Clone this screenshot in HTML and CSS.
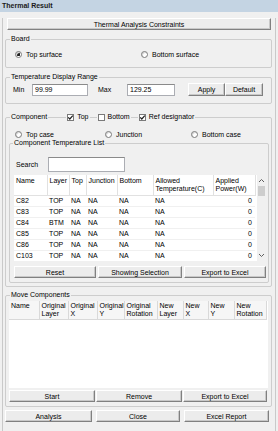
FILE: index.html
```html
<!DOCTYPE html>
<html lang="en">
<head>
    <meta charset="UTF-8">
    <meta name="viewport" content="width=device-width, initial-scale=1.0">
    <title>Thermal Result</title>
    <link rel="stylesheet" href="styles.css">
</head>
<body>
<div class="window">
    <div class="titlebar">Thermal Result</div>
    <div class="frame">
        <button class="btn constraints">Thermal Analysis Constraints</button>

        <div class="group board">
            <div class="group-head"><span class="title">Board</span></div>
            <div class="options board-opts">
                <span class="opt"><span class="radio on"></span>Top surface</span>
                <span class="opt"><span class="radio"></span>Bottom surface</span>
            </div>
        </div>

        <div class="group range">
            <div class="group-head"><span class="title">Temperature Display Range</span></div>
            <div class="range-row">
                <span class="lbl lbl-min">Min</span>
                <input class="field f-min" type="text" value="99.99">
                <span class="lbl lbl-max">Max</span>
                <input class="field f-max" type="text" value="129.25">
                <button class="btn apply">Apply</button>
                <button class="btn default">Default</button>
            </div>
        </div>

        <div class="group component">
            <div class="group-head">
                <span class="title">Component</span>
                <span class="check first"><span class="box"><svg width="7" height="7" viewBox="0 0 7 7"><path d="M1.2 3.4 L2.8 5 L5.8 1.6" fill="none" stroke="#1e1e1e" stroke-width="1.2"/></svg></span>Top</span>
                <span class="check"><span class="box"></span>Bottom</span>
                <span class="check"><span class="box"><svg width="7" height="7" viewBox="0 0 7 7"><path d="M1.2 3.4 L2.8 5 L5.8 1.6" fill="none" stroke="#1e1e1e" stroke-width="1.2"/></svg></span>Ref designator</span>
            </div>
            <div class="options comp-opts">
                <span class="opt"><span class="radio"></span>Top case</span>
                <span class="opt"><span class="radio"></span>Junction</span>
                <span class="opt"><span class="radio"></span>Bottom case</span>
            </div>

            <div class="group list">
                <div class="group-head"><span class="title">Component Temperature List</span></div>
                <div class="search">
                    <span class="lbl">Search</span>
                    <input class="field f-search" type="text">
                </div>
                <div class="listview">
                    <table class="temps">
                        <colgroup>
                            <col style="width:33px"><col style="width:22px"><col style="width:17px"><col style="width:31px">
                            <col style="width:36px"><col style="width:60px"><col style="width:42px">
                        </colgroup>
                        <thead>
                            <tr>
                                <th>Name</th><th>Layer</th><th>Top</th><th>Junction</th><th>Bottom</th>
                                <th>Allowed<br>Temperature(C)</th><th>Applied<br>Power(W)</th>
                            </tr>
                        </thead>
                        <tbody>
                            <tr><td>C82</td><td>TOP</td><td>NA</td><td>NA</td><td>NA</td><td>NA</td><td class="num">0</td></tr>
                            <tr><td>C83</td><td>TOP</td><td>NA</td><td>NA</td><td>NA</td><td>NA</td><td class="num">0</td></tr>
                            <tr><td>C84</td><td>BTM</td><td>NA</td><td>NA</td><td>NA</td><td>NA</td><td class="num">0</td></tr>
                            <tr><td>C85</td><td>TOP</td><td>NA</td><td>NA</td><td>NA</td><td>NA</td><td class="num">0</td></tr>
                            <tr><td>C86</td><td>TOP</td><td>NA</td><td>NA</td><td>NA</td><td>NA</td><td class="num">0</td></tr>
                            <tr><td>C103</td><td>TOP</td><td>NA</td><td>NA</td><td>NA</td><td>NA</td><td class="num">0</td></tr>
                        </tbody>
                    </table>
                    <div class="scrollbar">
                        <span class="arrow"><svg width="7" height="5" viewBox="0 0 7 5"><path d="M1 4 L3.5 1.5 L6 4" fill="none" stroke="#606060" stroke-width="1"/></svg></span>
                        <span class="thumb"></span>
                        <span class="track"></span>
                        <span class="arrow"><svg width="7" height="5" viewBox="0 0 7 5"><path d="M1 1 L3.5 3.5 L6 1" fill="none" stroke="#606060" stroke-width="1"/></svg></span>
                    </div>
                </div>
                <div class="buttons list-buttons">
                    <button class="btn">Reset</button>
                    <button class="btn">Showing Selection</button>
                    <button class="btn">Export to Excel</button>
                </div>
            </div>
        </div>

        <div class="group move">
            <div class="group-head"><span class="title">Move Components</span></div>
            <div class="moveview">
                <table class="moves">
                    <colgroup>
                        <col style="width:30px"><col style="width:29px"><col style="width:29px"><col style="width:27px"><col style="width:33px">
                        <col style="width:26px"><col style="width:25px"><col style="width:26px"><col style="width:32px">
                    </colgroup>
                    <thead>
                        <tr>
                            <th>Name</th><th>Original<br>Layer</th><th>Original<br>X</th><th>Original<br>Y</th><th>Original<br>Rotation</th>
                            <th>New<br>Layer</th><th>New<br>X</th><th>New<br>Y</th><th>New<br>Rotation</th>
                        </tr>
                    </thead>
                </table>
            </div>
            <div class="buttons move-buttons">
                <button class="btn">Start</button>
                <button class="btn">Remove</button>
                <button class="btn">Export to Excel</button>
            </div>
        </div>

        <div class="buttons footer-buttons">
            <button class="btn">Analysis</button>
            <button class="btn">Close</button>
            <button class="btn">Excel Report</button>
        </div>
    </div>
</div>
</body>
</html>
```

FILE: styles.css
```css
* {
    box-sizing: border-box;
}
body {
    margin: 0;
    font-family: "Liberation Sans", Arial, sans-serif;
    font-size: 7px;
    color: #000;
    background: #f0f0f0;
}
.window {
    width: 278px;
    height: 431px;
    background: #f0f0f0;
}
.titlebar {
    height: 12px;
    line-height: 12px;
    padding-left: 2px;
    background: #c4d4e3;
    font-weight: bold;
    color: #1a1a1a;
}
.frame {
    height: 416px;
    margin: 0 2px;
    border: 1px solid #c9c9c9;
    border-top: 0;
}

/* buttons */
.btn {
    height: 12px;
    padding: 0;
    font: inherit;
    color: #000;
    background: #ececec;
    border: 1px solid;
    border-color: #fff #808080 #808080 #fff;
    box-shadow: inset -1px -1px 0 #c8c8c8;
}
.constraints {
    display: block;
    width: 264px;
    margin: 6px 0 0 4px;
}
.buttons {
    display: grid;
}

/* group boxes */
.group {
    border: 1px solid #cdcdcd;
    border-radius: 2px;
}
.group-head {
    display: flex;
    height: 8px;
    margin: -5px 0 0 4px;
    line-height: 8px;
}
.group-head > span {
    background: #f0f0f0;
    padding: 0 1px;
}
.board, .range, .component, .move {
    width: 267px;
    margin-left: 2px;
}
.board {
    margin-top: 9px;
    padding-bottom: 8px;
}
.range {
    margin-top: 9px;
    padding-bottom: 7px;
}
.component {
    margin-top: 13px;
    padding-bottom: 3px;
}
.move {
    margin-top: 8px;
    padding: 0 3px 4px 3px;
}
.move .group-head {
    margin-left: 1px;
}

/* radios and checkboxes */
.options {
    display: grid;
    align-items: center;
    padding-left: 9px;
}
.board-opts {
    height: 10px;
    margin-top: 6px;
    grid-template-columns: 126px auto;
}
.comp-opts {
    height: 9px;
    margin-top: 9px;
    grid-template-columns: 90px 86px auto;
}
.opt {
    display: flex;
    align-items: center;
    gap: 4px;
}
.radio {
    width: 7px;
    height: 7px;
    border: 1px solid #7a7a7a;
    border-radius: 50%;
    background: #fff;
    box-shadow: inset 1px 1px 0 #d8d8d8;
}
.radio.on {
    background: radial-gradient(circle, #1e1e1e 0 1.4px, #fff 1.6px);
}
.check {
    display: flex;
    align-items: center;
    gap: 3px;
    margin-left: 7px;
    padding: 0 2px;
}
.check.first {
    margin-left: 18px;
}
.box {
    display: flex;
    width: 7px;
    height: 7px;
    border: 1px solid #7a7a7a;
    background: #fff;
    overflow: hidden;
    align-items: center;
    justify-content: center;
}
.box svg {
    flex-shrink: 0;
}

/* text fields */
.field {
    height: 12px;
    padding: 0 2px;
    font: inherit;
    background: #fff;
    border: 1px solid #abadb3;
    border-top-color: #8a8a8a;
    outline: none;
}
.range-row {
    display: flex;
    align-items: center;
    height: 13px;
    margin-top: 2px;
    padding-left: 7px;
}
.lbl-min {
    width: 19px;
}
.f-min {
    width: 56px;
}
.lbl-max {
    width: 29px;
    margin-left: 10px;
}
.f-max {
    width: 48px;
}
.apply {
    width: 37px;
    height: 13px;
    margin-left: 13px;
}
.default {
    width: 38px;
    height: 13px;
}

/* component temperature list */
.list {
    margin: 4px 2px 0 3px;
    padding: 0 2px 4px 4px;
}
.list .group-head {
    margin-left: -1px;
}
.search {
    display: flex;
    align-items: center;
    height: 15px;
    margin-top: 10px;
    padding-left: 2px;
}
.search .lbl {
    width: 32px;
}
.f-search {
    width: 77px;
    height: 15px;
}
.listview {
    display: flex;
    height: 86px;
    margin-top: 3px;
    background: #fff;
}
table {
    border-collapse: collapse;
    table-layout: fixed;
}
.temps {
    width: 241px;
}
.temps th {
    height: 20px;
    padding: 2px 1px 0 2px;
    text-align: left;
    font-weight: normal;
    vertical-align: top;
    line-height: 8px;
    white-space: nowrap;
    overflow: hidden;
    border-right: 1px solid #e1e1e1;
    border-bottom: 1px solid #e1e1e1;
}
.temps td {
    height: 11px;
    padding: 0 2px;
    line-height: 10px;
    white-space: nowrap;
    border-bottom: 1px solid #f0f0f0;
}
.temps td.num {
    text-align: right;
    padding-right: 3px;
}
.scrollbar {
    display: flex;
    flex-direction: column;
    width: 11px;
    margin-left: 1px;
    background: #f0f0f0;
}
.arrow {
    display: flex;
    align-items: center;
    justify-content: center;
    height: 11px;
}
.thumb {
    height: 10px;
    margin: 0 1px;
    background: #cdcdcd;
}
.track {
    flex: 1;
}
.list-buttons {
    margin-top: 5px;
    grid-template-columns: 82px 84px 82px;
    gap: 2px;
}

/* move components */
.moveview {
    height: 87px;
    margin-top: 2px;
    background: #fff;
}
.moves {
    width: 257px;
}
.moves th {
    height: 18px;
    padding: 1px 1px 0 2px;
    text-align: left;
    font-weight: normal;
    vertical-align: top;
    line-height: 8px;
    white-space: nowrap;
    overflow: hidden;
    background: #f6f6f6;
    border-right: 1px solid #d9d9d9;
    border-bottom: 1px solid #d9d9d9;
}
.move-buttons {
    margin-top: 2px;
    grid-template-columns: 86px 86px 84px;
    gap: 1px;
}
.footer-buttons {
    margin: 3px 0 0 2px;
    grid-template-columns: 87px 84px 85px;
    gap: 4px;
}
```
